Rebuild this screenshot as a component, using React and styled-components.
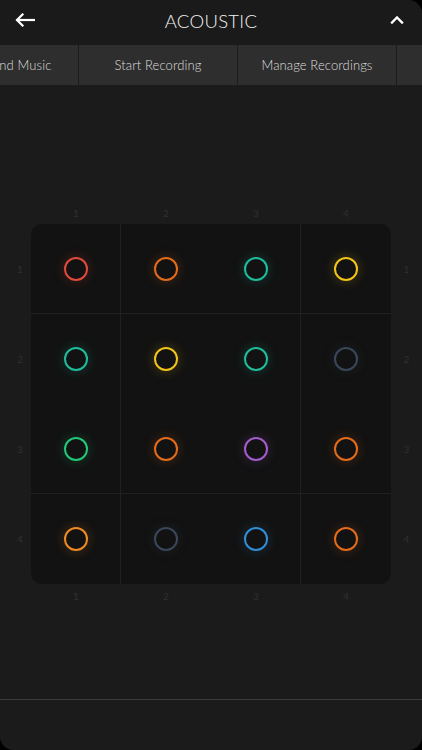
import React from "react";
import styled, { createGlobalStyle } from "styled-components";

const Global = createGlobalStyle`
  html, body { margin: 0; padding: 0; background: #000; }
  body { font-family: Lato, "Open Sans", sans-serif; }
  * { box-sizing: border-box; }
`;

const Screen = styled.div`
  width: 422px;
  height: 750px;
  background: #1b1b1b;
  border-radius: 0 14px 14px 14px;
  overflow: hidden;
  display: flex;
  flex-direction: column;
`;

const Header = styled.header`
  height: 45px;
  flex: none;
  display: grid;
  grid-template-columns: 50px 1fr 50px;
  align-items: center;
  background: #1a1a1a;
`;

const IconBtn = styled.div`
  display: flex;
  align-items: center;
  justify-content: ${(p) => p.$align};
  padding: 0 ${(p) => p.$pad}px;
  color: #fff;
  height: 100%;
  padding-bottom: 6px;
`;

const Title = styled.h1`
  margin: 0;
  text-align: center;
  color: #f2f2f2;
  font-weight: 300;
  font-size: 18.5px;
  letter-spacing: 0.3px;
  padding-bottom: 3px;
`;

const TabBar = styled.nav`
  height: 40px;
  flex: none;
  background: #2e2e2e;
  overflow: hidden;
  display: flex;
`;

const TabTrack = styled.div`
  display: flex;
  transform: translateX(-80px);
`;

const Tab = styled.div`
  flex: none;
  width: 159px;
  display: flex;
  align-items: center;
  justify-content: center;
  color: #dedede;
  font-size: 13px;
  font-weight: 300;
  letter-spacing: 0.1px;
  border-right: 1px solid #1c1c1c;
`;

const Main = styled.main`
  flex: 1;
  padding-top: 119px;
`;

const Board = styled.div`
  display: grid;
  grid-template-columns: 31px 360px 31px;
  grid-template-rows: 17px 360px 17px;
  row-gap: 3px;
`;

const Labels = styled.div`
  display: grid;
  grid-template-columns: ${(p) => (p.$vertical ? "1fr" : "repeat(4, 90px)")};
  grid-template-rows: ${(p) => (p.$vertical ? "repeat(4, 90px)" : "1fr")};
  grid-column: ${(p) => p.$col};
  grid-row: ${(p) => p.$row};
`;

const Label = styled.span`
  display: flex;
  align-items: center;
  justify-content: center;
  color: #303030;
  font-size: 10px;
  line-height: 1;
  padding-left: ${(p) => p.$shift || 0}px;
`;

const Pads = styled.div`
  grid-column: 2;
  grid-row: 2;
  background: #121212;
  border-radius: 11px;
  display: grid;
  grid-template-columns: repeat(4, 90px);
  grid-template-rows: repeat(4, 90px);
  overflow: hidden;
`;

const Cell = styled.div`
  display: flex;
  align-items: center;
  justify-content: center;
  border-right: ${(p) => (p.$right ? "1px solid #212121" : "none")};
  border-bottom: ${(p) => (p.$bottom ? "1px solid #212121" : "none")};
`;

const Ring = styled.div`
  width: 24px;
  height: 24px;
  border-radius: 50%;
  border: 2.5px solid ${(p) => p.$c};
  box-shadow: 0 0 12px ${(p) => p.$c}40;
`;

const Footer = styled.footer`
  height: 51px;
  flex: none;
  border-top: 1.5px solid #3c3c3c;
  background: #1b1b1b;
`;

const R = "#df4a3b";
const O = "#e36b1b";
const T = "#1fbc9b";
const Y = "#f2c41a";
const S = "#3a475a";
const G = "#22c878";
const P = "#a45ccd";
const A = "#ee8a24";
const B = "#2f8ed6";

const grid = [
  [R, O, T, Y],
  [T, Y, T, S],
  [G, O, P, O],
  [A, S, B, O],
];

const nums = [1, 2, 3, 4];

export default function App() {
  return (
    <>
      <Global />
      <Screen>
        <Header>
          <IconBtn $align="flex-start" $pad={15}>
            <svg width="20" height="14" viewBox="0 0 20 14" fill="none" stroke="#fff" strokeWidth="2.2" strokeLinecap="square">
              <path d="M19 7H2.5" />
              <path d="M7.5 1.5L2 7l5.5 5.5" />
            </svg>
          </IconBtn>
          <Title>ACOUSTIC</Title>
          <IconBtn $align="flex-end" $pad={18}>
            <svg width="14" height="9" viewBox="0 0 14 9" fill="none" stroke="#fff" strokeWidth="2.4" strokeLinecap="square">
              <path d="M2 7.5L7 2.5l5 5" />
            </svg>
          </IconBtn>
        </Header>
        <TabBar>
          <TabTrack>
            <Tab>Background Music</Tab>
            <Tab>Start Recording</Tab>
            <Tab>Manage Recordings</Tab>
            <Tab />
          </TabTrack>
        </TabBar>
        <Main>
          <Board>
            <Labels $col="2" $row="1">
              {nums.map((n) => (
                <Label key={n}>{n}</Label>
              ))}
            </Labels>
            <Labels $vertical $col="1" $row="2">
              {nums.map((n) => (
                <Label key={n} $shift={9}>{n}</Label>
              ))}
            </Labels>
            <Pads>
              {grid.map((row, r) =>
                row.map((c, ci) => (
                  <Cell key={`${r}-${ci}`} $right={ci === 0 || ci === 2} $bottom={r === 0 || r === 2}>
                    <Ring $c={c} />
                  </Cell>
                ))
              )}
            </Pads>
            <Labels $vertical $col="3" $row="2">
              {nums.map((n) => (
                <Label key={n}>{n}</Label>
              ))}
            </Labels>
            <Labels $col="2" $row="3">
              {nums.map((n) => (
                <Label key={n}>{n}</Label>
              ))}
            </Labels>
          </Board>
        </Main>
        <Footer />
      </Screen>
    </>
  );
}
